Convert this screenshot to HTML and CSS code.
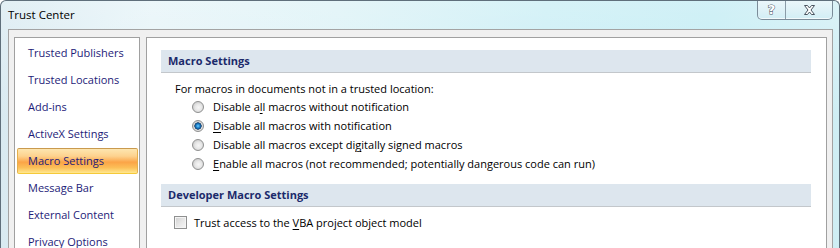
FILE: index.html
```html
<!DOCTYPE html>
<html>
<head>
<meta charset="utf-8">
<link rel="stylesheet" href="styles.css">
</head>
<body>
<div class="window">
  <div class="titlebar">
    <span class="title">Trust Center</span>
    <div class="caption-buttons">
      <div class="cbtn help"><span class="help-glyph">?</span></div>
      <div class="cbtn close">
        <svg width="13" height="10" viewBox="0 0 13 10">
          <path d="M1.5 0.5 H4.5 L6.5 3 L8.5 0.5 H11.5 L8 5 L11.5 9.5 H8.5 L6.5 7 L4.5 9.5 H1.5 L5 5 Z" fill="#fff" stroke="#4a5560" stroke-width="1" stroke-linejoin="round"/>
        </svg>
      </div>
    </div>
  </div>
  <div class="client">
    <nav class="nav">
      <div class="nav-item">Trusted Publishers</div>
      <div class="nav-item">Trusted Locations</div>
      <div class="nav-item">Add-ins</div>
      <div class="nav-item">ActiveX Settings</div>
      <div class="nav-item selected">Macro Settings</div>
      <div class="nav-item">Message Bar</div>
      <div class="nav-item">External Content</div>
      <div class="nav-item">Privacy Options</div>
    </nav>
    <main class="content">
      <div class="section-header">Macro Settings</div>
      <div class="intro">For macros in documents not in a trusted location:</div>
      <div class="options">
        <div class="opt"><span class="radio"></span><span>Disable a<u>l</u>l macros without notification</span></div>
        <div class="opt"><span class="radio checked"></span><span><u>D</u>isable all macros with notification</span></div>
        <div class="opt"><span class="radio"></span><span>Disable all macros except di<u>g</u>itally signed macros</span></div>
        <div class="opt"><span class="radio"></span><span><u>E</u>nable all macros (not recommended; potentially dangerous code can run)</span></div>
      </div>
      <div class="section-header dev">Developer Macro Settings</div>
      <div class="check-row"><span class="checkbox"></span><span>Trust access to the <u>V</u>BA project object model</span></div>
    </main>
  </div>
</div>
</body>
</html>
```
FILE: styles.css
```css
* { box-sizing: border-box; }
html, body {
  margin: 0;
  padding: 0;
  width: 840px;
  height: 248px;
  overflow: hidden;
  background: #fff;
}
body {
  font-family: "Open Sans", "Noto Sans", sans-serif;
  font-size: 11px;
  color: #000;
}
.window {
  width: 840px;
  height: 300px;
  border: 1px solid #5f6f7b;
  border-bottom: none;
  border-radius: 6px 6px 0 0;
  padding: 0 6px 0 7px;
  background:
    linear-gradient(180deg, rgba(255,255,255,0.25) 0%, rgba(255,255,255,0) 40%),
    linear-gradient(90deg, #d9eaf1 0%, #e6f4f8 18%, #dcf2f6 40%, #c9eef5 65%, #c2ecf4 85%, #cfeef4 100%);
}
.titlebar {
  height: 28px;
  display: flex;
  align-items: flex-start;
}
.title {
  line-height: 28px;
  font-size: 11.5px;
  color: #000;
}
.caption-buttons {
  margin-left: auto;
  display: flex;
  height: 19px;
  border: 1px solid #7b8c99;
  border-top: none;
  border-radius: 0 0 5px 5px;
  overflow: hidden;
  background: linear-gradient(180deg, #eaf6fa 0%, #dff2f7 50%, #d2eef5 100%);
  box-shadow: inset 0 -1px 0 rgba(255,255,255,0.7);
}
.cbtn {
  display: flex;
  align-items: center;
  justify-content: center;
}
.help {
  width: 28px;
  border-right: 1px solid #8a9ba7;
}
.help-glyph {
  font-family: "DejaVu Sans", sans-serif;
  font-weight: bold;
  font-size: 13px;
  line-height: 13px;
  color: #fff;
  -webkit-text-stroke: 1px #4a5560;
  paint-order: stroke fill;
  margin-top: -1px;
}
.close {
  width: 46px;
}
.client {
  display: flex;
  gap: 6px;
  height: 270px;
  border: 1px solid #a3a3a3;
  border-bottom: none;
  background: #f0f0f0;
  padding: 7px 5px 0 5px;
}
.nav {
  width: 126px;
  flex: none;
  background: #fff;
  border: 1px solid #a0a0a0;
  padding: 2px 1px 0 2px;
}
.nav-item {
  height: 26px;
  margin-bottom: 1px;
  border: 1px solid transparent;
  padding-left: 10px;
  line-height: 24px;
  color: #1d1b78;
  white-space: nowrap;
}
.nav-item.selected {
  border-color: #c99a4e #e6b04c #f5c93a;
  border-radius: 2px;
  background: linear-gradient(180deg, #fde6b0 0%, #fdd28e 30%, #fba447 55%, #fcbf58 78%, #ffe88f 100%);
}
.content {
  flex: 1;
  background: #fff;
  border: 1px solid #a0a0a0;
  padding: 12px 15px 0 14px;
}
.section-header {
  height: 23px;
  background: #dde6ee;
  border-bottom: 1px solid #c3c7cb;
  padding-left: 7px;
  line-height: 22px;
  font-weight: bold;
  color: #1b2a6b;
}
.section-header.dev {
  margin-top: 11px;
}
.intro {
  margin-top: 8px;
  padding-left: 14px;
  line-height: 16px;
}
.options {
  padding-left: 31px;
}
.opt, .check-row {
  display: flex;
  align-items: center;
  height: 19px;
  white-space: nowrap;
}
.radio {
  width: 12px;
  height: 12px;
  border-radius: 50%;
  border: 1px solid #8f9090;
  margin-right: 9px;
  flex: none;
  background: radial-gradient(circle at 55% 55%, #f6f6f6 0%, #e8e8e8 40%, #d2d2d2 70%, #e9e9e9 100%);
}
.radio.checked {
  background:
    radial-gradient(circle at 50% 50%, #6fd0fa 0px, #2a8fd8 1.5px, #115a99 2.8px, #1b3f66 3.4px, rgba(0,0,0,0) 3.9px),
    radial-gradient(circle at 55% 55%, #f6f6f6 0%, #e8e8e8 40%, #d2d2d2 70%, #e9e9e9 100%);
}
.check-row {
  margin-top: 6px;
  padding-left: 13px;
}
.checkbox {
  width: 13px;
  height: 13px;
  border: 1px solid #8f9090;
  margin-right: 7px;
  flex: none;
  box-shadow: inset 0 0 0 1px #f4f4f4;
  background: linear-gradient(135deg, #cfcfcf 0%, #e6e6e6 50%, #f7f7f7 100%);
}
u { text-decoration-thickness: 1px; text-underline-offset: 2px; }
```
